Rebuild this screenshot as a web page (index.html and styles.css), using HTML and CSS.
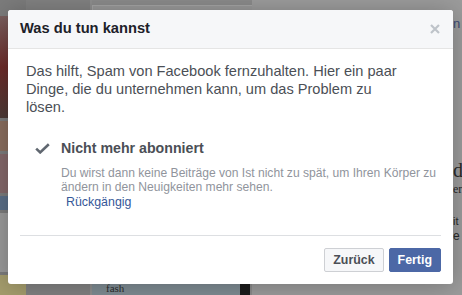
FILE: index.html
```html
<!DOCTYPE html>
<html lang="de">

<head>
    <meta charset="UTF-8">
    <title>Was du tun kannst</title>
    <link rel="stylesheet" href="styles.css">
</head>

<body>
    <div class="page">
        <!-- dimmed page behind the dialog -->
        <div class="backdrop">
            <div class="side">
                <div class="thumb thumb-red"></div>
                <div class="thumb thumb-brown"></div>
                <div class="thumb thumb-pink"></div>
                <div class="thumb thumb-blue"></div>
                <div class="thumb thumb-grid"></div>
                <div class="thumb thumb-yellow"></div>
            </div>
            <div class="rail"></div>
            <div class="feed">
                <div class="feed-card"></div>
                <div class="feed-bottom">
                    <div class="feed-photo">fash</div>
                    <div class="feed-dark"></div>
                </div>
            </div>
            <div class="aside">
                <span class="aside-n">n</span>
                <span class="aside-d">d</span>
                <span class="aside-er">er</span>
                <span class="aside-it">it</span>
                <span class="aside-e">e</span>
            </div>
        </div>

        <div class="dialog">
            <div class="dialog-header">
                <h2>Was du tun kannst</h2>
                <svg class="close" width="10" height="10" viewBox="0 0 10 10">
                    <path d="M1 1 L9 9 M9 1 L1 9" stroke="#bec3c9" stroke-width="2.2" />
                </svg>
            </div>
            <div class="dialog-body">
                <p class="intro">Das hilft, Spam von Facebook fernzuhalten. Hier ein paar Dinge, die du unternehmen kann, um das Problem zu lösen.</p>
                <div class="action">
                    <svg class="check" width="15" height="11" viewBox="0 0 15 11">
                        <path d="M1.2 5.6 L5.2 9.4 L13.8 1.2" fill="none" stroke="#606770" stroke-width="2.6" />
                    </svg>
                    <div class="action-text">
                        <div class="action-title">Nicht mehr abonniert</div>
                        <div class="action-desc">Du wirst dann keine Beiträge von Ist nicht zu spät, um Ihren Körper zu ändern in den Neuigkeiten mehr sehen.</div>
                        <a class="undo">Rückgängig</a>
                    </div>
                </div>
            </div>
            <div class="dialog-footer">
                <button class="btn">Zurück</button>
                <button class="btn btn-primary">Fertig</button>
            </div>
        </div>
    </div>
</body>

</html>
```

FILE: styles.css
```css
* {
    padding: 0;
    margin: 0;
    box-sizing: border-box;
}

body {
    font-family: "Liberation Sans", Arial, sans-serif;
    background-color: #8a8a8a;
}

.page {
    position: relative;
    width: 462px;
    height: 295px;
    overflow: hidden;
}

/* background page, already dimmed */
.backdrop {
    display: flex;
    height: 100%;
    background-color: #8b8b8b;
}

.side {
    width: 26px;
    display: flex;
    flex-direction: column;
    gap: 3px;
    padding-top: 16px;
    background-color: #7c7c7c;
}

.thumb {
    width: 100%;
}

.thumb-red {
    height: 104px;
    background: linear-gradient(#7a5f5e, #6e2c2a 50%, #4d3b37);
}

.thumb-brown {
    height: 30px;
    background-color: #8a6e5e;
}

.thumb-pink {
    height: 40px;
    background-color: #84686a;
}

.thumb-blue {
    height: 14px;
    background-color: #5b6f88;
}

.thumb-grid {
    height: 60px;
    background-color: #9a9a9a;
}

.thumb-yellow {
    height: 20px;
    background-color: #a59d6d;
}

.rail {
    width: 66px;
    background-color: #828282;
    border-right: 2px solid #8f8f8f;
}

.feed {
    width: 160px;
    display: flex;
    flex-direction: column;
    padding-top: 5px;
}

.feed-card {
    flex: 1;
    background-color: #999999;
    border-top: 1px solid #a5a5a5;
    border-left: 1px solid #a5a5a5;
}

.feed-bottom {
    display: flex;
    height: 14px;
}

.feed-photo {
    width: 148px;
    background-color: #7f8c93;
    color: #2d2d2d;
    font-family: "Liberation Serif", serif;
    font-size: 11px;
    line-height: 14px;
    padding-left: 14px;
    overflow: hidden;
}

.feed-dark {
    width: 10px;
    background-color: #1c1c1c;
}

.aside {
    flex: 1;
    display: flex;
    flex-direction: column;
    align-items: flex-end;
    background-color: #9c9c9c;
    color: #2a2a2a;
}

.aside span {
    display: block;
    width: 9px;
}

.aside-n {
    margin-top: 16px;
    font-size: 13px;
    color: #3b4b75;
}

.aside-d {
    margin-top: 128px;
    font-family: "Liberation Serif", serif;
    font-size: 20px;
}

.aside-er {
    font-family: "Liberation Serif", serif;
    font-size: 12px;
}

.aside-it {
    margin-top: 18px;
    font-size: 11px;
}

.aside-e {
    margin-top: 2px;
    font-size: 12px;
}

/* dialog */
.dialog {
    position: absolute;
    left: 8px;
    top: 10px;
    width: 445px;
    height: 274px;
    background-color: #ffffff;
    border-radius: 3px;
    box-shadow: 0 2px 26px rgba(0, 0, 0, 0.25);
    display: flex;
    flex-direction: column;
}

.dialog-header {
    height: 40px;
    display: flex;
    align-items: center;
    justify-content: space-between;
    padding: 0 13px 1px 12px;
    background-color: #f6f7f9;
    border-bottom: 1px solid #e5e5e5;
    border-radius: 3px 3px 0 0;
}

.dialog-header h2 {
    font-size: 14.7px;
    font-weight: bold;
    color: #1d2129;
    line-height: 19px;
}

.close {
    display: block;
    margin-top: 1px;
}

.dialog-body {
    padding: 13px 12px 26px 18px;
    color: #4b4f56;
}

.intro {
    width: 374px;
    font-size: 14.6px;
    line-height: 18px;
}

.action {
    display: flex;
    margin-top: 23px;
    padding-left: 9px;
}

.check {
    display: block;
    margin-top: 4px;
    margin-right: 11px;
    flex-shrink: 0;
}

.action-title {
    font-size: 14.2px;
    font-weight: bold;
    line-height: 18px;
}

.action-desc {
    margin-top: 9px;
    font-size: 12.1px;
    line-height: 14.5px;
    color: #90949c;
    width: 380px;
}

.undo {
    display: block;
    padding-left: 5px;
    font-size: 12.4px;
    line-height: 14.5px;
    color: #365899;
}

.dialog-footer {
    margin: auto 12px 0;
    padding: 12px 0;
    border-top: 1px solid #dddfe2;
    display: flex;
    justify-content: flex-end;
    gap: 5px;
}

.btn {
    font-family: "Liberation Sans", Arial, sans-serif;
    font-size: 12.4px;
    font-weight: bold;
    height: 24px;
    padding: 0 8px;
    border: 1px solid #ced0d4;
    border-radius: 2px;
    background-color: #f6f7f9;
    color: #4b4f56;
}

.btn-primary {
    background-color: #4c68a6;
    border-color: #4c68a6;
    color: #ffffff;
}
```
